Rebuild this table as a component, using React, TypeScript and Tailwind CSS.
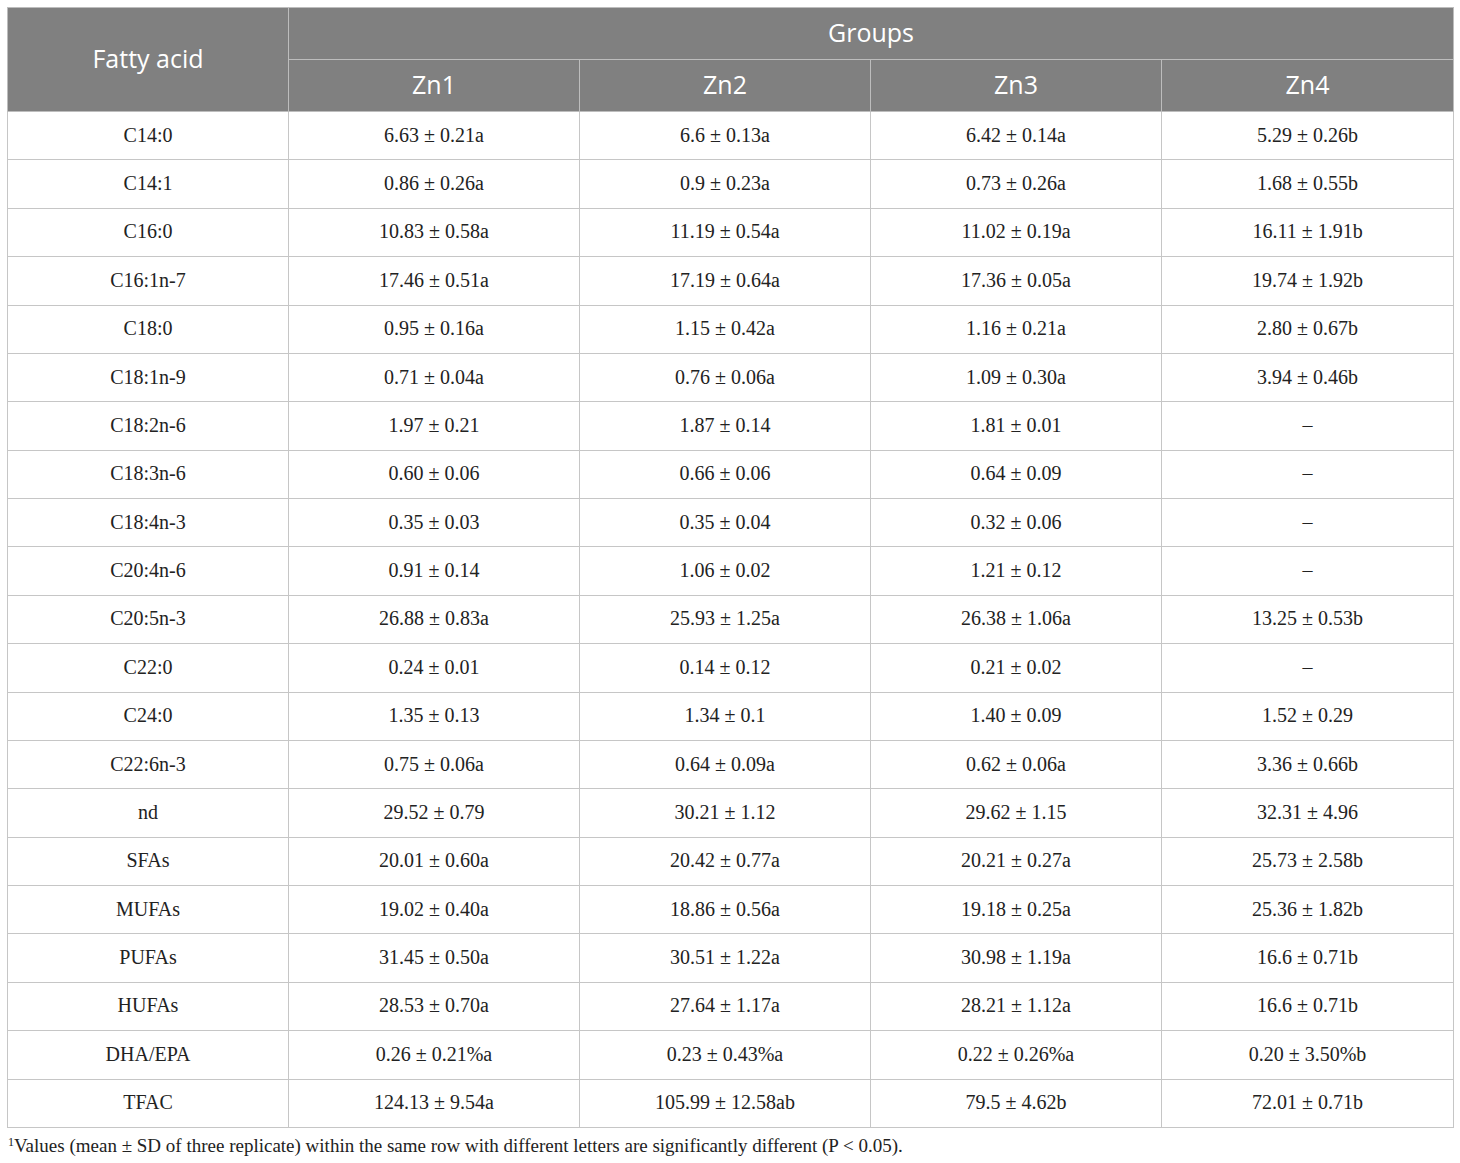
const ROWS: [string, string, string, string, string][] = [
  ['C14:0', '6.63 ± 0.21a', '6.6 ± 0.13a', '6.42 ± 0.14a', '5.29 ± 0.26b'],
  ['C14:1', '0.86 ± 0.26a', '0.9 ± 0.23a', '0.73 ± 0.26a', '1.68 ± 0.55b'],
  ['C16:0', '10.83 ± 0.58a', '11.19 ± 0.54a', '11.02 ± 0.19a', '16.11 ± 1.91b'],
  ['C16:1n-7', '17.46 ± 0.51a', '17.19 ± 0.64a', '17.36 ± 0.05a', '19.74 ± 1.92b'],
  ['C18:0', '0.95 ± 0.16a', '1.15 ± 0.42a', '1.16 ± 0.21a', '2.80 ± 0.67b'],
  ['C18:1n-9', '0.71 ± 0.04a', '0.76 ± 0.06a', '1.09 ± 0.30a', '3.94 ± 0.46b'],
  ['C18:2n-6', '1.97 ± 0.21', '1.87 ± 0.14', '1.81 ± 0.01', '–'],
  ['C18:3n-6', '0.60 ± 0.06', '0.66 ± 0.06', '0.64 ± 0.09', '–'],
  ['C18:4n-3', '0.35 ± 0.03', '0.35 ± 0.04', '0.32 ± 0.06', '–'],
  ['C20:4n-6', '0.91 ± 0.14', '1.06 ± 0.02', '1.21 ± 0.12', '–'],
  ['C20:5n-3', '26.88 ± 0.83a', '25.93 ± 1.25a', '26.38 ± 1.06a', '13.25 ± 0.53b'],
  ['C22:0', '0.24 ± 0.01', '0.14 ± 0.12', '0.21 ± 0.02', '–'],
  ['C24:0', '1.35 ± 0.13', '1.34 ± 0.1', '1.40 ± 0.09', '1.52 ± 0.29'],
  ['C22:6n-3', '0.75 ± 0.06a', '0.64 ± 0.09a', '0.62 ± 0.06a', '3.36 ± 0.66b'],
  ['nd', '29.52 ± 0.79', '30.21 ± 1.12', '29.62 ± 1.15', '32.31 ± 4.96'],
  ['SFAs', '20.01 ± 0.60a', '20.42 ± 0.77a', '20.21 ± 0.27a', '25.73 ± 2.58b'],
  ['MUFAs', '19.02 ± 0.40a', '18.86 ± 0.56a', '19.18 ± 0.25a', '25.36 ± 1.82b'],
  ['PUFAs', '31.45 ± 0.50a', '30.51 ± 1.22a', '30.98 ± 1.19a', '16.6 ± 0.71b'],
  ['HUFAs', '28.53 ± 0.70a', '27.64 ± 1.17a', '28.21 ± 1.12a', '16.6 ± 0.71b'],
  ['DHA/EPA', '0.26 ± 0.21%a', '0.23 ± 0.43%a', '0.22 ± 0.26%a', '0.20 ± 3.50%b'],
  ['TFAC', '124.13 ± 9.54a', '105.99 ± 12.58ab', '79.5 ± 4.62b', '72.01 ± 0.71b'],
]

const GROUPS = ['Zn1', 'Zn2', 'Zn3', 'Zn4']

export default function App() {
  return (
    <div className="w-[1460px] min-h-[1163px] bg-white pt-[7px] px-[7px]">
      <table className="w-[1446px] table-fixed border-collapse border border-[#c6c6c6]">
        <colgroup>
          <col className="w-[281px]" />
          <col className="w-[291px]" />
          <col className="w-[291px]" />
          <col className="w-[291px]" />
          <col className="w-[292px]" />
        </colgroup>
        <thead className="bg-[#808080] text-white font-['Open_Sans',sans-serif] text-[25px] leading-[30px]">
          <tr className="h-[52px]">
            <th rowSpan={2} className="border border-[#bdbdbd] font-normal text-center align-middle pb-[4px]">
              Fatty acid
            </th>
            <th colSpan={4} className="border border-[#bdbdbd] font-normal text-center align-middle pb-[4px]">
              Groups
            </th>
          </tr>
          <tr className="h-[52px]">
            {GROUPS.map(g => (
              <th key={g} className="border border-[#bdbdbd] font-normal text-center align-middle pb-[4px]">
                {g}
              </th>
            ))}
          </tr>
        </thead>
        <tbody className="font-['Liberation_Serif',serif] text-[20px] text-[#222222]">
          {ROWS.map(row => (
            <tr key={row[0]} className="h-[48.38px]">
              {row.map((cell, i) => (
                <td key={i} className="border border-[#c6c6c6] text-center align-middle p-0 pb-[2px]">
                  {cell}
                </td>
              ))}
            </tr>
          ))}
        </tbody>
      </table>
      <p className="mt-[5px] pl-[1px] font-['Liberation_Serif',serif] text-[19px] text-[#222222] leading-[26px]">
        <sup className="text-[12px]">1</sup>Values (mean ± SD of three replicate) within the same row with different letters are significantly different (P &lt; 0.05).
      </p>
    </div>
  )
}
